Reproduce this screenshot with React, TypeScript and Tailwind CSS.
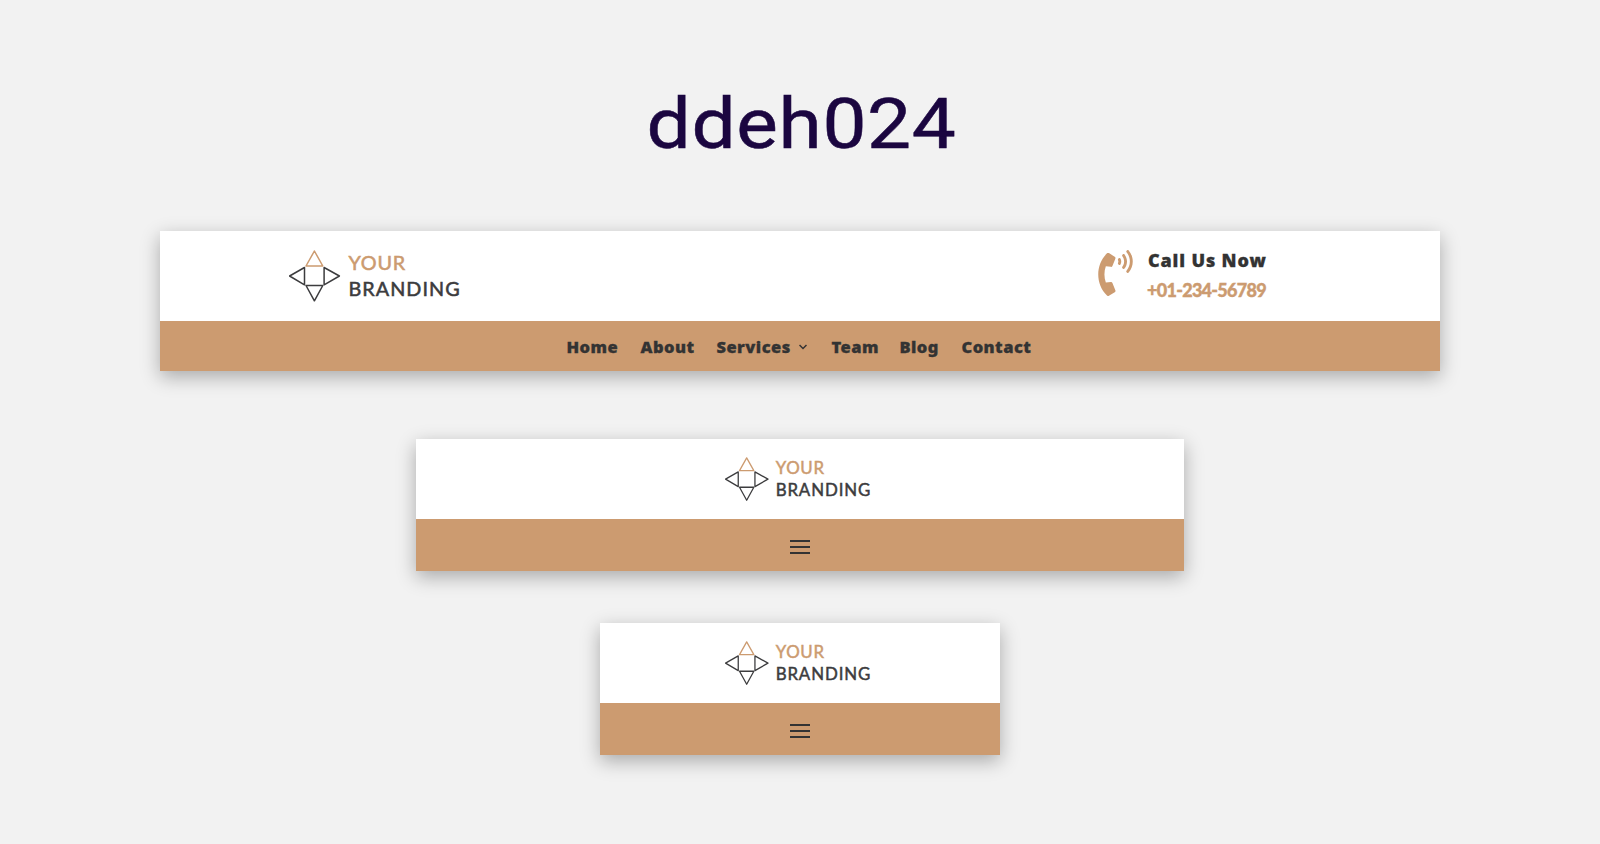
import { FaPhoneVolume } from "react-icons/fa";
import type { ReactNode } from "react";

function Logo({ className }: { className: string }) {
  return (
    <svg viewBox="0 0 172 52" className={className} role="img" aria-label="Your Branding">
      <g fill="none" strokeWidth="1.5" strokeLinejoin="round">
        <g stroke="#3c3c3e">
          <path d="M15.5 17.5 L0.6 26 L15.5 34.8 Z" />
          <path d="M35.1 17.5 L50.4 26 L35.1 34.8 Z" />
          <path d="M17 35.5 H33.8 L25.4 50.8 Z" />
        </g>
        <path d="M17 16 H33.8 L25.4 1 Z" stroke="#cc9b70" />
      </g>
      <g fontFamily="Lato, sans-serif" fontSize="19.8" fontWeight="400" strokeWidth="0.55">
        <text x="59.4" y="20" textLength="56.8" fill="#cc9b70" stroke="#cc9b70">YOUR</text>
        <text x="59.4" y="46" textLength="111.2" fill="#3c3c3e" stroke="#3c3c3e">BRANDING</text>
      </g>
    </svg>
  );
}

function Card({ className, children }: { className: string; children: ReactNode }) {
  return (
    <header className={`shadow-[0_6px_18px_rgba(0,0,0,0.3)] ${className}`}>{children}</header>
  );
}

function CompactHeader({ className }: { className: string }) {
  return (
    <Card className={className}>
      <div className="flex h-20 justify-center bg-white pt-[18px]">
        <Logo className="h-[44.3px] w-[146.6px] -translate-x-[2px]" />
      </div>
      <div className="flex h-[52px] items-center justify-center bg-[#cc9b70] pt-1">
        <button aria-label="Menu" className="flex w-5 flex-col gap-1">
          <span className="h-0.5 bg-[#333333]" />
          <span className="h-0.5 bg-[#333333]" />
          <span className="h-0.5 bg-[#333333]" />
        </button>
      </div>
    </Card>
  );
}

const nav = [
  { label: "Home", width: "w-[52px]" },
  { label: "About", width: "w-[54px]" },
  { label: "Services", width: "w-[93px]", menu: true },
  { label: "Team", width: "w-[46px]" },
  { label: "Blog", width: "w-[40px]" },
  { label: "Contact", width: "w-[72px]" },
];

export default function App() {
  return (
    <main className="flex h-[844px] flex-col items-center bg-[#f2f2f2] font-['Noto_Sans',sans-serif] text-[#333333]">
      <h1 className="mt-[81px] h-[150px] scale-x-[1.12] pl-[2px] font-['Roboto',sans-serif] text-[70px] leading-[86px] tracking-[0.6px] text-[#1b0640] [-webkit-text-stroke:0.5px_#1b0640]">
        ddeh024
      </h1>
      <Card className="w-[1280px] shrink-0">
        <div className="flex h-[90px] justify-between bg-white pr-[171px] pl-[129px]">
          <Logo className="mt-[19px] h-[52px] w-[172px]" />
          <div className="flex w-[171px] justify-between pt-[18px]">
            <FaPhoneVolume className="mt-px h-[46px] w-[35px] text-[#cc9b70]" />
            <div className="w-[122px] whitespace-nowrap">
              <div className="-mt-px pl-px text-[18px] leading-6 font-black tracking-[0.85px] [-webkit-text-stroke:0.3px_#333333]">Call Us Now</div>
              <div className="mt-[6px] font-['Lato',sans-serif] text-[18px] leading-6 font-black tracking-[-0.72px] text-[#cc9b70] [-webkit-text-stroke:0.4px_#cc9b70]">
                +01-234-56789
              </div>
            </div>
          </div>
        </div>
        <nav className="flex h-[50px] items-center justify-center gap-[22px] bg-[#cc9b70] pt-0.5 text-[16.5px] leading-6 font-black tracking-[0.45px]">
          {nav.map(({ label, width, menu }) => (
            <a key={label} className={`flex shrink-0 items-center justify-between whitespace-nowrap [-webkit-text-stroke:0.3px_#333333] ${width}`}>
              {label}
              {menu && (
                <svg viewBox="0 0 8 6" className="mr-[3px] h-[6px] w-2 shrink-0" fill="none" stroke="#333333" strokeWidth="1.5">
                  <path d="M0.5 1 L4 4.5 L7.5 1" />
                </svg>
              )}
            </a>
          ))}
        </nav>
      </Card>
      <CompactHeader className="mt-[68px] w-[768px]" />
      <CompactHeader className="mt-[52px] w-[400px]" />
    </main>
  );
}
